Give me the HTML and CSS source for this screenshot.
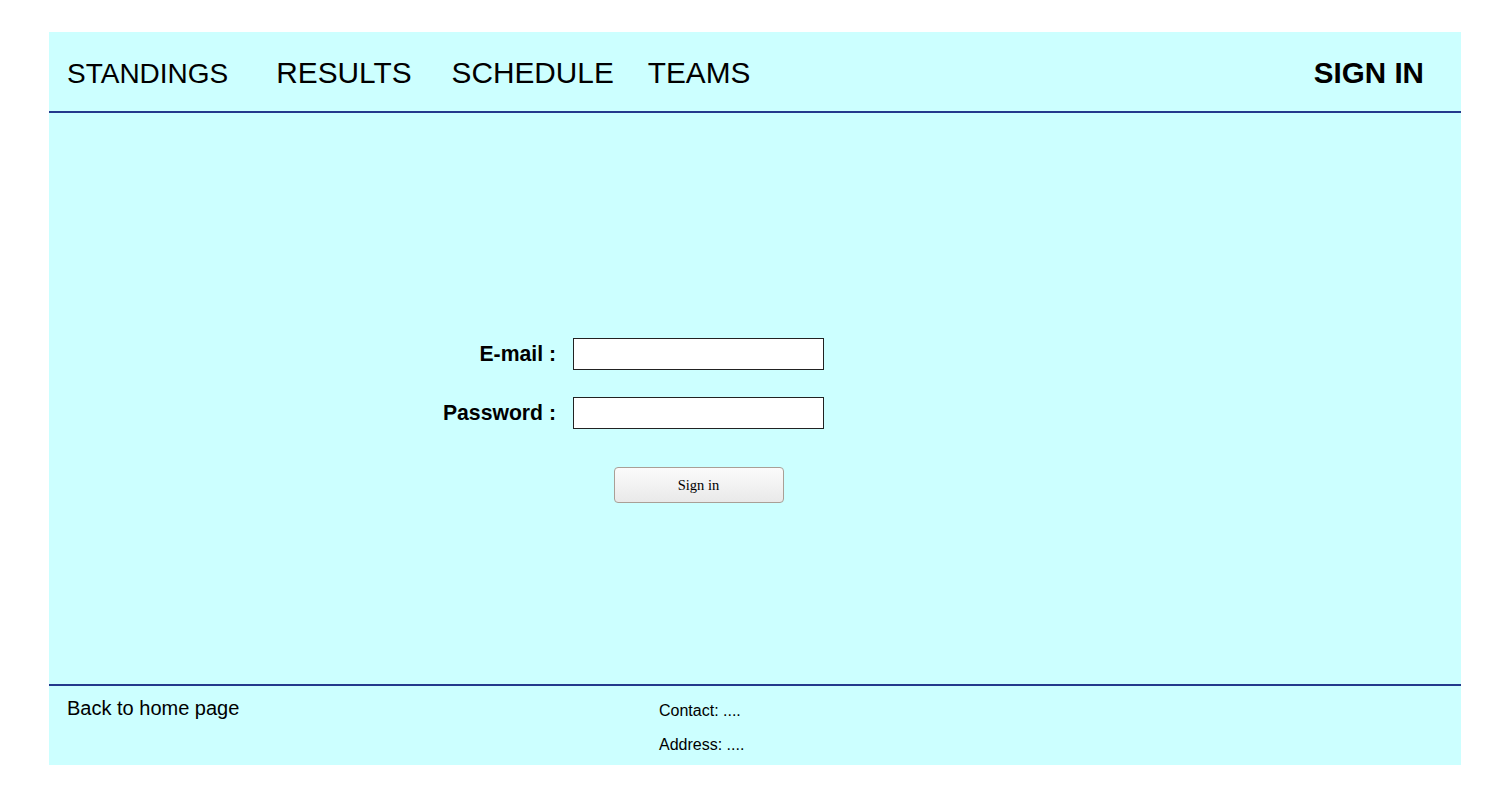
FILE: index.html
```html
<!DOCTYPE html>
<html lang="en">
<head>
<meta charset="utf-8">
<title>Sign in</title>
<link rel="stylesheet" href="styles.css">
</head>
<body>
<div class="page">
  <header class="header">
    <nav class="nav">
      <a class="nav-link nav-standings" href="#">STANDINGS</a>
      <a class="nav-link nav-results" href="#">RESULTS</a>
      <a class="nav-link nav-schedule" href="#">SCHEDULE</a>
      <a class="nav-link nav-teams" href="#">TEAMS</a>
    </nav>
    <a class="signin-link" href="#">SIGN IN</a>
  </header>
  <main class="main">
    <form class="login-form">
      <label class="form-label" for="email">E-mail :</label>
      <input class="form-input" type="text" id="email">
      <label class="form-label" for="password">Password :</label>
      <input class="form-input" type="password" id="password">
      <button class="form-button" type="button">Sign in</button>
    </form>
  </main>
  <footer class="footer">
    <a class="home-link" href="#">Back to home page</a>
    <div class="contact">
      <p class="contact-line">Contact: ....</p>
      <p class="contact-line">Address: ....</p>
    </div>
  </footer>
</div>
</body>
</html>
```
FILE: styles.css
```css
html, body {
  margin: 0;
  padding: 0;
  background: #ffffff;
}

.page {
  margin: 32px 0 0 49px;
  width: 1412px;
  background: #ccffff;
  font-family: "Liberation Sans", Arial, sans-serif;
  color: #000;
}

.header {
  height: 81px;
  display: flex;
  align-items: center;
  justify-content: space-between;
  padding: 2px 37px 0 18px;
  box-sizing: border-box;
  border-bottom: 2px solid #24398c;
}

.nav {
  display: flex;
  align-items: center;
}

.nav-link {
  color: #000;
  text-decoration: none;
  font-size: 29.8px;
}

.nav-standings {
  font-size: 28px;
  position: relative;
  top: 1px;
}

.nav-results {
  margin-left: 48px;
}

.nav-schedule {
  margin-left: 40px;
}

.nav-teams {
  margin-left: 34px;
}

.signin-link {
  color: #000;
  text-decoration: none;
  font-weight: bold;
  font-size: 29.6px;
}

.main {
  height: 571px;
  padding-top: 225px;
  box-sizing: border-box;
}

.login-form {
  display: grid;
  grid-template-columns: 130px 251px;
  column-gap: 17px;
  row-gap: 27px;
  margin-left: 377px;
  align-items: center;
}

.form-label {
  text-align: right;
  font-weight: bold;
  font-size: 21.2px;
}

.form-input {
  width: 251px;
  height: 32px;
  box-sizing: border-box;
  border: 1px solid #222;
  background: #fff;
  margin: 0;
  padding: 2px 4px;
}

.form-button {
  grid-column: 2;
  justify-self: center;
  margin-top: 11px;
  width: 170px;
  height: 36px;
  border: 1px solid #a99f96;
  border-radius: 4px;
  background: linear-gradient(#fbfbfb, #e9e9e9);
  font-family: "Liberation Serif", "Times New Roman", serif;
  font-size: 14.5px;
  color: #000;
  padding: 0;
}

.footer {
  height: 81px;
  box-sizing: border-box;
  border-top: 2px solid #24398c;
  display: flex;
  align-items: flex-start;
}

.home-link {
  color: #000;
  text-decoration: none;
  font-size: 20px;
  margin: 11px 0 0 18px;
  width: 592px;
}

.contact {
  padding-top: 8px;
}

.contact-line {
  margin: 0;
  font-size: 16px;
  line-height: 34px;
}
```
